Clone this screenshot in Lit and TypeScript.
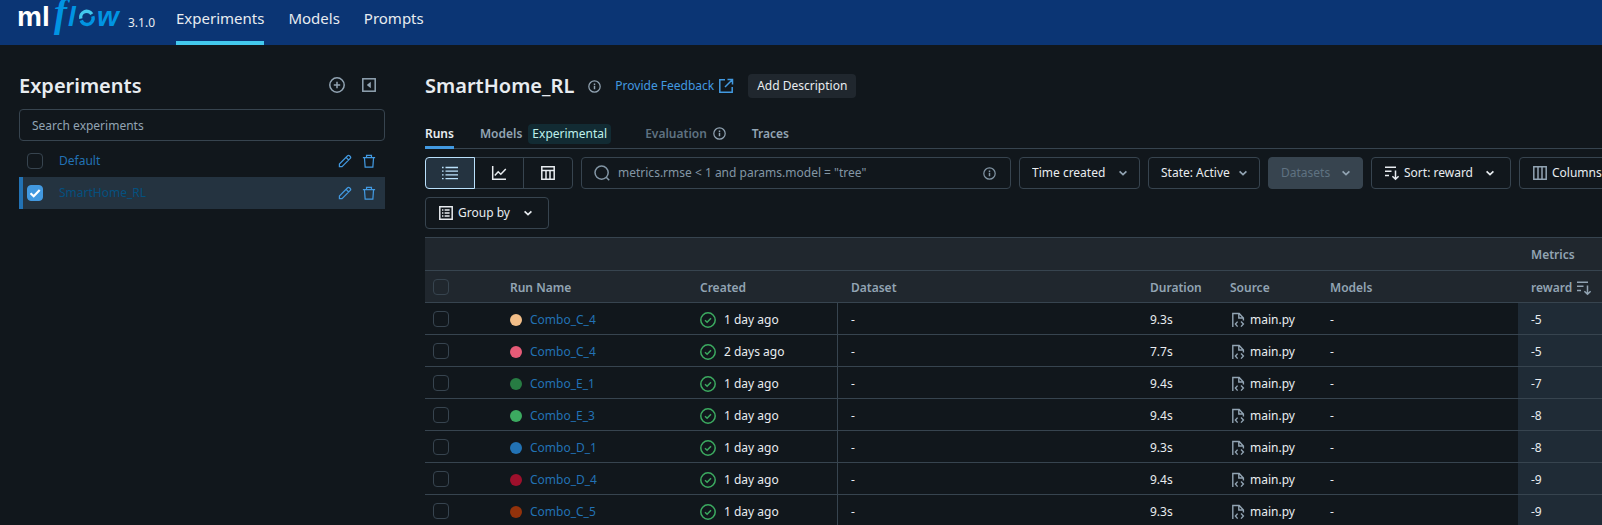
import { LitElement, html, css, svg, nothing } from "lit";
import { customElement, property, state } from "lit/decorators.js";
import { classMap } from "lit/directives/class-map.js";
import { styleMap } from "lit/directives/style-map.js";

const base = css`
  *, *::before, *::after { box-sizing: border-box; }
  a { color: inherit; text-decoration: none; }
  button, input, select { font: inherit; color: inherit; margin: 0; }
  button { cursor: pointer; white-space: nowrap; }
`;

const glyphs: Record<string, unknown> = {
  plus: svg`<circle cx="8" cy="8" r="7.2"/><path d="M8 4.8v6.4M4.8 8h6.4"/>`,
  collapse: svg`<rect x="1.8" y="1.8" width="12.4" height="12.4"/><path d="M9.8 4.8v6.4L5.8 8z" fill="currentColor" stroke="none"/>`,
  info: svg`<circle cx="8" cy="8" r="7"/><path d="M8 7.2v4.3M8 4.3v1.7" stroke-width="1.8"/>`,
  external: svg`<path d="M7 1.8H1.8v12.4h12.4V9M9.5 1.5h5v5M14.3 1.7 7 9"/>`,
  pencil: svg`<path d="M1.6 14.4v-3L11 2a1.5 1.5 0 0 1 2.1 0l.9.9a1.5 1.5 0 0 1 0 2.1l-9.4 9.4zM9.2 3.8l3 3" stroke-width="1.4"/>`,
  trash: svg`<path d="M1 4.2h14M5.2 4.2V1.5h5.6v2.7M2.8 4.2l.8 10.8h8.8l.8-10.8" stroke-width="1.4"/>`,
  list: svg`<path d="M3.5 2.5H16M3.5 6.2H16M3.5 9.9H16M3.5 13.6H16M0 2.5h1.6M0 6.2h1.6M0 9.9h1.6M0 13.6h1.6" stroke-width="1.3"/>`,
  chart: svg`<path d="M1.7 1v13.3H15M3.8 10.6l3.4-3.8 2.6 2.4L14.8 4"/>`,
  grid: svg`<path d="M1.8 1.8h12.4v12.4H1.8zM1.8 5.4h12.4M6 5.4v8.8M10 5.4v8.8"/>`,
  search: svg`<circle cx="7.6" cy="7.6" r="6.6"/><path d="m12.2 12.2 3 3"/>`,
  chevron: svg`<path d="m4.6 6.4 3.4 3.2 3.4-3.2" stroke-width="1.7"/>`,
  sort: svg`<path d="M1 2.2h11M1 6.3h6.5M1 10.4h4M11.5 5.5v8.8M8.4 11.2l3.1 3.1 3.1-3.1"/>`,
  columns: svg`<path d="M1.8 1.8h12.4v12.4H1.8zM6 1.8v12.4M10 1.8v12.4"/>`,
  group: svg`<path d="M1.8 1.8h12.4v12.4H1.8zM6.6 5h5M6.6 8h5M6.6 11h5M4 5h1.4M4 8h1.4M4 11h1.4"/>`,
  check: svg`<circle cx="8" cy="8" r="7.2"/><path d="m5 8.2 2.1 2 3.9-4"/>`,
  file: svg`<path d="M2.8 15V1.5h6.4L13.4 6v2.6M8.8 1.8V6h4.4M7.6 9.6 5.4 12l2.2 2.6M11 9.6l2.4 2.4-2.4 2.6" stroke-width="1.4"/>`,
};

@customElement("ml-icon")
class MlIcon extends LitElement {
  @property() name = "";
  static styles = css`
    :host { display: inline-flex; width: 16px; height: 16px; flex: none; }
    svg { width: 100%; height: 100%; fill: none; stroke: currentColor; stroke-width: 1.5; }
  `;
  render() {
    return html`<svg viewBox="0 0 16 16" aria-hidden="true">${glyphs[this.name] ?? nothing}</svg>`;
  }
}

@customElement("ml-header")
class MlHeader extends LitElement {
  static styles = [base, css`
    :host { display: block; background: #0b3574; color: #e8ecf0; }
    .bar { display: flex; height: 45px; padding-left: 19px; }
    .logo { width: 105px; height: 36px; flex: none; overflow: visible; }
    .ml { font: 700 28px "Liberation Sans", sans-serif; fill: #fff; }
    .flow { font: italic 700 28px "Liberation Sans", sans-serif; fill: #0194e2; }
    .eff { font: italic 700 39px "Liberation Serif", serif; fill: #0194e2; }
    .ring { fill: none; stroke: #0194e2; stroke-width: 3.4; }
    .ring.light { stroke: #43c9ed; }
    .version { font-size: 12px; line-height: 16px; padding: 15px 0 0 4px; width: 52px; }
    nav { display: flex; gap: 24px; }
    nav a { font-size: 15px; line-height: 37px; height: 45px; border-bottom: 4px solid transparent; }
    nav a.on { border-color: #43c9ed; }
  `];
  render() {
    return html`<header class="bar">
      <svg class="logo" viewBox="0 0 105 36" role="img" aria-label="mlflow">
        <text class="ml" x="-2" y="26">ml</text>
        <text class="eff" x="35" y="26">f</text>
        <text class="flow" x="49" y="26">l</text>
        <path class="ring" d="M62.2 20.4a6 6 0 0 0 10.6 1.5M73.8 16.2a6 6 0 0 1-1 5.7"/>
        <path class="ring light" d="M61.8 18.6a6 6 0 0 1 11-4.4"/>
        <text class="flow" x="78" y="26">w</text>
      </svg>
      <span class="version">3.1.0</span>
      <nav><a class="on" href="#experiments">Experiments</a><a href="#models">Models</a><a href="#prompts">Prompts</a></nav>
    </header>`;
  }
}

const checkbox = css`
  .box {
    appearance: none; display: block; flex: none; width: 16px; height: 16px;
    border: 1px solid #37444f; border-radius: 4px; background: transparent;
  }
  .box:checked {
    border-color: #4299e0;
    background: #4299e0 url("data:image/svg+xml,%3Csvg xmlns='http://www.w3.org/2000/svg' viewBox='0 0 16 16'%3E%3Cpath d='m3.5 8.2 3.2 3 6-6.2' fill='none' stroke='white' stroke-width='2.2'/%3E%3C/svg%3E") center / 16px;
  }
`;

@customElement("ml-sidebar")
class MlSidebar extends LitElement {
  @state() private selected = "SmartHome_RL";
  static styles = [base, checkbox, css`
    :host { display: block; }
    .head { display: flex; align-items: center; height: 32px; gap: 16px; padding-right: 8px; }
    h1 { flex: 1; margin: 0; padding-top: 2px; font-size: 20px; line-height: 30px; font-weight: 600; color: #e8ecf0; }
    .icon { display: inline-flex; border: 0; padding: 0; background: none; color: #92a4b3; }
    .find {
      display: block; width: 100%; height: 32px; margin: 8px 0 4px; padding: 0 12px;
      border: 1px solid #37444f; border-radius: 4px; background: transparent;
    }
    .find::placeholder { color: #92a4b3; opacity: 1; }
    ul { list-style: none; margin: 0; padding: 0; }
    li { display: flex; align-items: center; height: 32px; padding-right: 9px; border-left: 4px solid transparent; }
    .box { margin: 0 16px 0 4px; }
    li a { flex: 1; color: #2272b4; }
    li .icon { color: #4299e0; margin-left: 10px; }
    li ml-icon { width: 14px; height: 14px; }
    li.on { background: #243340; border-color: #2272b4; }
    li.on a { color: #04507f; }
  `];
  render() {
    return html`
      <div class="head">
        <h1>Experiments</h1>
        <button class="icon" aria-label="New experiment"><ml-icon name="plus"></ml-icon></button>
        <button class="icon" aria-label="Hide experiment list"><ml-icon name="collapse"></ml-icon></button>
      </div>
      <input class="find" type="search" aria-label="Search experiments" placeholder="Search experiments">
      <ul>
        ${["Default", "SmartHome_RL"].map((n) => html`<li class=${classMap({ on: n === this.selected })}>
          <input class="box" type="checkbox" aria-label=${n} .checked=${n === this.selected} @change=${() => (this.selected = n)}>
          <a href="#${n}">${n}</a>
          <button class="icon" aria-label="Rename ${n}"><ml-icon name="pencil"></ml-icon></button>
          <button class="icon" aria-label="Delete ${n}"><ml-icon name="trash"></ml-icon></button>
        </li>`)}
      </ul>`;
  }
}

@customElement("ml-toolbar")
class MlToolbar extends LitElement {
  static styles = [base, css`
    :host { display: grid; gap: 8px; color: #e8ecf0; }
    .row { display: flex; gap: 8px; }
    .row > * { flex: none; }
    .modes { display: flex; }
    .modes button {
      display: grid; place-items: center; width: 50px; height: 32px; margin-right: -1px;
      border: 1px solid #37444f; background: none;
    }
    .modes button:first-child { border-radius: 4px 0 0 4px; }
    .modes button:last-child { border-radius: 0 4px 4px 0; margin: 0; }
    .modes .on { background: #243340; border-color: #bae1fc; color: #bae1fc; z-index: 1; }
    .query {
      display: flex; align-items: center; gap: 8px; height: 32px; width: 430px; padding: 0 14px 0 12px;
      border: 1px solid #37444f; border-radius: 4px; color: #8396a5;
    }
    .query input { flex: 1; min-width: 0; border: 0; padding: 0; background: none; outline: none; }
    .query input::placeholder { color: #8396a5; opacity: 1; }
    .query .hint { width: 13px; height: 13px; }
    .pick { display: grid; align-items: center; height: 32px; border: 1px solid #37444f; border-radius: 4px; }
    .pick > * { grid-area: 1 / 1; }
    .pick select { appearance: none; height: 30px; padding: 0 24px 0 12px; border: 0; background: none; width: 100%; opacity: 1; }
    .pick ml-icon { justify-self: end; margin-right: 8px; color: #92a4b3; pointer-events: none; }
    .time { width: 121px; }
    .state { width: 112px; }
    .data { width: 95px; background: #37444f; color: #5f7281; }
    .act {
      display: inline-flex; align-items: center; gap: 4px; height: 32px; padding: 0 12px;
      border: 1px solid #37444f; border-radius: 4px; background: none;
    }
    .sort { width: 140px; }
    .group { width: 124px; }
    .act span { flex: 1; text-align: left; }
    .cols ml-icon { color: #92a4b3; }
  `];
  render() {
    return html`
      <div class="row">
        <div class="modes" role="group" aria-label="View">
          <button class="on" aria-label="Table view"><ml-icon name="list"></ml-icon></button>
          <button aria-label="Chart view"><ml-icon name="chart"></ml-icon></button>
          <button aria-label="Artifact view"><ml-icon name="grid"></ml-icon></button>
        </div>
        <label class="query">
          <ml-icon name="search"></ml-icon>
          <input type="text" aria-label="Search runs" placeholder='metrics.rmse < 1 and params.model = "tree"'>
          <ml-icon class="hint" name="info"></ml-icon>
        </label>
        <label class="pick time"><select aria-label="Time created"><option>Time created</option></select><ml-icon name="chevron"></ml-icon></label>
        <label class="pick state"><select aria-label="State"><option>State: Active</option></select><ml-icon name="chevron"></ml-icon></label>
        <label class="pick data"><select aria-label="Datasets" disabled><option>Datasets</option></select><ml-icon name="chevron"></ml-icon></label>
        <button class="act sort" aria-haspopup="menu"><ml-icon name="sort"></ml-icon><span>Sort: reward</span><ml-icon name="chevron"></ml-icon></button>
        <button class="act cols" aria-haspopup="menu"><ml-icon name="columns"></ml-icon><span>Columns</span><ml-icon name="chevron"></ml-icon></button>
      </div>
      <div class="row">
        <button class="act group" aria-haspopup="menu"><ml-icon name="group"></ml-icon><span>Group by</span><ml-icon name="chevron"></ml-icon></button>
      </div>`;
  }
}

interface Run { name: string; color: string; created: string; duration: string; reward: number; }
const runs: Run[] = [
  { name: "Combo_C_4", color: "#f2be88", created: "1 day ago", duration: "9.3s", reward: -5 },
  { name: "Combo_C_4", color: "#e65b77", created: "2 days ago", duration: "7.7s", reward: -5 },
  { name: "Combo_E_1", color: "#277c43", created: "1 day ago", duration: "9.4s", reward: -7 },
  { name: "Combo_E_3", color: "#3caa60", created: "1 day ago", duration: "9.4s", reward: -8 },
  { name: "Combo_D_1", color: "#2272b4", created: "1 day ago", duration: "9.3s", reward: -8 },
  { name: "Combo_D_4", color: "#9e102c", created: "1 day ago", duration: "9.4s", reward: -9 },
  { name: "Combo_C_5", color: "#93320b", created: "1 day ago", duration: "9.3s", reward: -9 },
];

@customElement("ml-runs")
class MlRuns extends LitElement {
  static styles = [base, checkbox, css`
    :host { display: block; color: #e8ecf0; }
    table { width: 100%; table-layout: fixed; border-collapse: separate; border-spacing: 0; border-top: 1px solid #37444f; }
    th, td { height: 32px; padding: 2px 0 0 13px; border-bottom: 1px solid #37444f; text-align: left; white-space: nowrap; overflow: hidden; }
    th { background: #20272e; color: #92a4b3; font-weight: 600; }
    .top th { height: 33px; }
    th:first-child, td:first-child { padding: 0 0 0 8px; }
    .c-check { width: 72px; }
    .c-name { width: 190px; }
    .c-created { width: 151px; }
    .c-duration { width: 80px; }
    .c-source { width: 100px; }
    .c-models { width: 201px; }
    .c-metric { width: 84px; }
    .cell { display: flex; align-items: center; gap: 8px; }
    .tight { gap: 4px; }
    .dot { width: 12px; height: 12px; border-radius: 50%; flex: none; }
    .cell a { color: #2272b4; }
    .cell a.src { color: #e8ecf0; }
    .ok { color: #3caa60; }
    .file { color: #92a4b3; }
    td.created { border-right: 1px solid #37444f; }
    td.metric { background: #1f2b36; }
  `];
  render() {
    return html`<table>
      <colgroup>
        <col class="c-check"><col class="c-name"><col class="c-created"><col>
        <col class="c-duration"><col class="c-source"><col class="c-models"><col class="c-metric">
      </colgroup>
      <thead>
        <tr class="top"><th colspan="7"></th><th>Metrics</th></tr>
        <tr>
          <th><input class="box" type="checkbox" aria-label="Select all runs"></th>
          <th>Run Name</th><th>Created</th><th>Dataset</th><th>Duration</th><th>Source</th><th>Models</th>
          <th><div class="cell tight">reward <ml-icon name="sort"></ml-icon></div></th>
        </tr>
      </thead>
      <tbody>
        ${runs.map((r) => html`<tr>
          <td><input class="box" type="checkbox" aria-label="Select ${r.name}"></td>
          <td><div class="cell"><span class="dot" style=${styleMap({ background: r.color })}></span><a href="#run">${r.name}</a></div></td>
          <td class="created"><div class="cell"><ml-icon class="ok" name="check"></ml-icon>${r.created}</div></td>
          <td>-</td>
          <td>${r.duration}</td>
          <td><div class="cell tight"><ml-icon class="file" name="file"></ml-icon><a class="src" href="#source">main.py</a></div></td>
          <td>-</td>
          <td class="metric">${r.reward}</td>
        </tr>`)}
      </tbody>
    </table>`;
  }
}

@customElement("app-root")
class AppRoot extends LitElement {
  static styles = [base, css`
    :host {
      display: block; height: 100vh; overflow: hidden; background: #11171c; color: #e8ecf0;
      font: 12px/20px "Noto Sans", "Open Sans", sans-serif;
    }
    .page { display: grid; grid-template-columns: 366px minmax(0, 1fr); gap: 40px; padding: 24px 0 0 19px; }
    main { min-width: 0; overflow: hidden; }
    .title { display: flex; align-items: center; height: 32px; padding-top: 2px; }
    h2 { margin: 0 14px 0 0; font-size: 20px; line-height: 30px; font-weight: 600; }
    .info { width: 13px; height: 13px; color: #92a4b3; }
    .feedback { display: flex; align-items: center; gap: 4px; margin: 0 14px; color: #4299e0; }
    .describe { height: 24px; padding: 0 9px; border: 0; border-radius: 4px; background: #20272e; }
    .tabs { display: flex; gap: 26px; height: 32px; margin: 16px 0 8px; border-bottom: 1px solid #37444f; font-weight: 600; color: #92a4b3; }
    .tabs a { display: flex; align-items: center; gap: 6px; height: 32px; padding-top: 4px; border-bottom: 3px solid transparent; }
    .tabs .on { border-color: #4299e0; color: #e8ecf0; }
    .badge { padding: 0 4px; border-radius: 4px; background: #122b33; color: #bff0ec; font-weight: 400; }
    .tabs .off { color: #5f7281; margin-left: 8px; }
    ml-toolbar { margin-bottom: 8px; }
  `];
  render() {
    return html`
      <ml-header></ml-header>
      <div class="page">
        <ml-sidebar></ml-sidebar>
        <main>
          <div class="title">
            <h2>SmartHome_RL</h2>
            <ml-icon class="info" name="info"></ml-icon>
            <a class="feedback" href="#feedback">Provide Feedback <ml-icon name="external"></ml-icon></a>
            <button class="describe">Add Description</button>
          </div>
          <nav class="tabs">
            <a class="on" href="#runs">Runs</a>
            <a href="#logged-models">Models <span class="badge">Experimental</span></a>
            <a class="off" href="#evaluation">Evaluation <ml-icon class="info" name="info"></ml-icon></a>
            <a href="#traces">Traces</a>
          </nav>
          <ml-toolbar></ml-toolbar>
          <ml-runs></ml-runs>
        </main>
      </div>`;
  }
}
